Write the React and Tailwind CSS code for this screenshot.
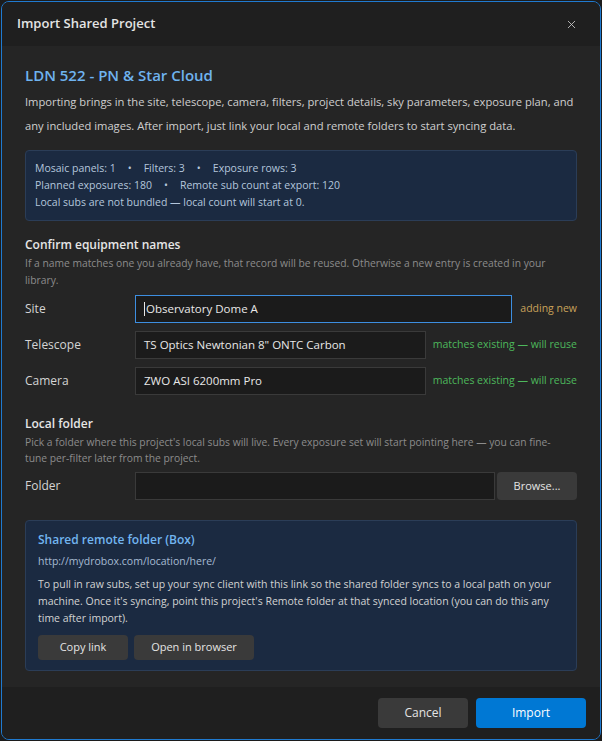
import { X } from "lucide-react";

const font = "font-['Open_Sans',sans-serif]";

function Field({ label, value, focused, note, noteColor }) {
  return (
    <div className="flex items-center h-7">
      <div className="w-[110px] text-[12px] text-[#d4d4d4]">{label}</div>
      <div
        className={
          "h-7 flex items-center px-2 text-[11.5px] text-[#e8e8e8] bg-[#1b1b1b] border " +
          (focused ? "border-[#3d8ee0] w-[377px]" : "border-[#3a3a3a] w-[291px]")
        }
      >
        {focused && <span className="w-px h-3.5 bg-[#e8e8e8] mr-px" />}
        {value}
      </div>
      <div className={"ml-auto whitespace-nowrap text-[10.5px] " + noteColor}>{note}</div>
    </div>
  );
}

function App() {
  return (
    <div className={"min-h-screen bg-[#1c1c1c] p-px " + font}>
      <div className="h-[739px] flex flex-col rounded-lg border border-[#1f7ad0] overflow-hidden bg-[#252525]">
        {/* header */}
        <div className="h-[44px] shrink-0 bg-[#1f1f1f] flex items-center justify-between pl-[15px] pr-[22px]">
          <h1 className="text-[13px] font-semibold text-[#e4e4e4]">Import Shared Project</h1>
          <X size={13} strokeWidth={1.6} className="text-[#c8c8c8]" />
        </div>

        {/* body */}
        <div className="flex-1 px-[23px] pt-[19px]">
          <h2 className="text-[15px] font-semibold text-[#6fb3ef] leading-5">LDN 522 - PN &amp; Star Cloud</h2>
          <p className="mt-[5px] text-[11.2px] leading-[24px] text-[#cfcfcf]">
            Importing brings in the site, telescope, camera, filters, project details, sky parameters, exposure plan, and
            any included images. After import, just link your local and remote folders to start syncing data.
          </p>

          <div className="mt-[12px] rounded bg-[#1b2a41] border border-[#2b3d57] px-[9px] py-[9px] text-[10.5px] leading-[17px] text-[#b4c6dc]">
            <div className="flex gap-[12px]">
              <span>Mosaic panels: 1</span>
              <span>•</span>
              <span>Filters: 3</span>
              <span>•</span>
              <span>Exposure rows: 3</span>
            </div>
            <div className="flex gap-[12px]">
              <span>Planned exposures: 180</span>
              <span>•</span>
              <span>Remote sub count at export: 120</span>
            </div>
            <div>Local subs are not bundled — local count will start at 0.</div>
          </div>

          <h3 className="mt-[15px] text-[12px] font-semibold text-[#e6e6e6]">Confirm equipment names</h3>
          <p className="mt-[1px] text-[10.3px] leading-[17px] text-[#8c8c8c]">
            If a name matches one you already have, that record will be reused. Otherwise a new entry is created in your
            library.
          </p>

          <div className="mt-[6px] flex flex-col gap-2">
            <Field label="Site" value="Observatory Dome A" focused note="adding new" noteColor="text-[#c9a25a]" />
            <Field
              label="Telescope"
              value={'TS Optics Newtonian 8" ONTC Carbon'}
              note="matches existing — will reuse"
              noteColor="text-[#4db85c]"
            />
            <Field label="Camera" value="ZWO ASI 6200mm Pro" note="matches existing — will reuse" noteColor="text-[#4db85c]" />
          </div>

          <h3 className="mt-[20px] text-[12px] font-semibold text-[#e6e6e6]">Local folder</h3>
          <p className="mt-[1px] text-[10.3px] leading-[16px] text-[#8c8c8c] max-w-[540px]">
            Pick a folder where this project's local subs will live. Every exposure set will start pointing here — you can fine-tune
            per-filter later from the project.
          </p>

          <div className="mt-[6px] flex items-center">
            <div className="w-[110px] text-[12px] text-[#d4d4d4]">Folder</div>
            <div className="w-[360px] h-7 bg-[#1b1b1b] border border-[#3a3a3a]" />
            <button className="ml-auto w-[80px] h-7 rounded bg-[#3a3a3a] text-[11px] text-[#e4e4e4]">Browse...</button>
          </div>

          <div className="mt-[20px] rounded bg-[#1b2a41] border border-[#2b3d57] px-3 pt-[9px] pb-[10px]">
            <div className="text-[12px] font-semibold text-[#72b5f0] leading-5">Shared remote folder (Box)</div>
            <div className="mt-[3px] text-[10.5px] text-[#a6bad2] leading-[17px]">http://mydrobox.com/location/here/</div>
            <p className="mt-[6px] text-[10.5px] leading-[17px] text-[#d2d2d2] max-w-[520px]">
              To pull in raw subs, set up your sync client with this link so the shared folder syncs to a local path on your
              machine. Once it's syncing, point this project's Remote folder at that synced location (you can do this any
              time after import).
            </p>
            <div className="mt-[8px] flex gap-[6px]">
              <button className="w-[90px] h-[25px] rounded-sm bg-[#3a3a3a] text-[11px] text-[#e4e4e4]">Copy link</button>
              <button className="w-[120px] h-[25px] rounded-sm bg-[#3a3a3a] text-[11px] text-[#e4e4e4]">Open in browser</button>
            </div>
          </div>
        </div>

        {/* footer */}
        <div className="h-[52px] shrink-0 bg-[#1f1f1f] flex items-center justify-end gap-2 pr-[14px]">
          <button className="w-[90px] h-[30px] rounded bg-[#3a3a3a] text-[12px] text-[#e4e4e4]">Cancel</button>
          <button className="w-[110px] h-[30px] rounded bg-[#0078d4] text-[12px] text-white">Import</button>
        </div>
      </div>
    </div>
  );
}

export default App;
